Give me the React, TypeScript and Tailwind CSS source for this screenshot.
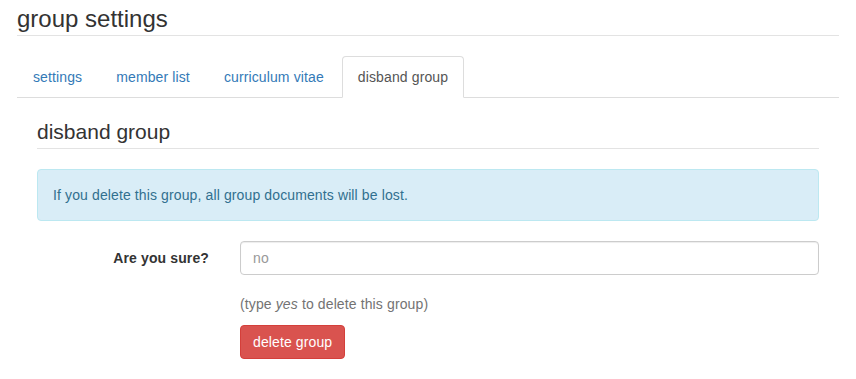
import React from "react";

export default function App() {
  const tabs = ["settings", "member list", "curriculum vitae", "disband group"];
  const active = 3;
  return (
    <div
      className="min-h-[379px] w-[856px] bg-white px-[17px] text-[14px] tracking-[0.12px] text-[#333]"
      style={{ fontFamily: '"Liberation Sans", Arial, sans-serif' }}
    >
      <div className="border-b border-[#e3e3e3] pb-[3px] pt-[6px] text-[24px] leading-[26px] tracking-normal text-[#333]">
        group settings
      </div>

      <ul className="mt-[20px] flex border-b border-[#ddd]">
        {tabs.map((t, i) => (
          <li key={t} className="-mb-px mr-[2px]">
            <a
              href="#"
              className={
                i === active
                  ? "block rounded-t-[4px] border border-[#ddd] border-b-transparent bg-white px-[15px] py-[10px] leading-[20px] text-[#555]"
                  : "block rounded-t-[4px] border border-transparent px-[15px] py-[10px] leading-[20px] text-[#337ab7]"
              }
            >
              {t}
            </a>
          </li>
        ))}
      </ul>

      <div className="px-[20px] pt-[22px]">
        <div className="border-b border-[#e3e3e3] pb-[5px] text-[21px] leading-[23px] tracking-normal text-[#333]">
          disband group
        </div>

        <div className="mt-[20px] rounded-[4px] border border-[#bce8f1] bg-[#d9edf7] p-[15px] leading-[20px] text-[#31708f]">
          If you delete this group, all group documents will be lost.
        </div>

        <div className="mt-[20px] flex items-start">
          <label className="w-[172px] pt-[7px] text-right font-bold leading-[20px] text-[#333]">
            Are you sure?
          </label>
          <div className="ml-[31px] flex-1">
            <input
              type="text"
              placeholder="no"
              className="block h-[34px] w-full rounded-[4px] border border-[#ccc] px-[12px] py-[6px] leading-[20px] text-[#555] shadow-[inset_0_1px_1px_rgba(0,0,0,0.075)] outline-none placeholder:text-[#999]"
            />
            <div className="mt-[19px] leading-[20px] text-[#737373]">
              (type <em>yes</em> to delete this group)
            </div>
            <button
              type="button"
              className="mt-[11px] h-[34px] rounded-[4px] border border-[#d43f3a] bg-[#d9534f] px-[12px] leading-[20px] text-white"
            >
              delete group
            </button>
          </div>
        </div>
      </div>
    </div>
  );
}
